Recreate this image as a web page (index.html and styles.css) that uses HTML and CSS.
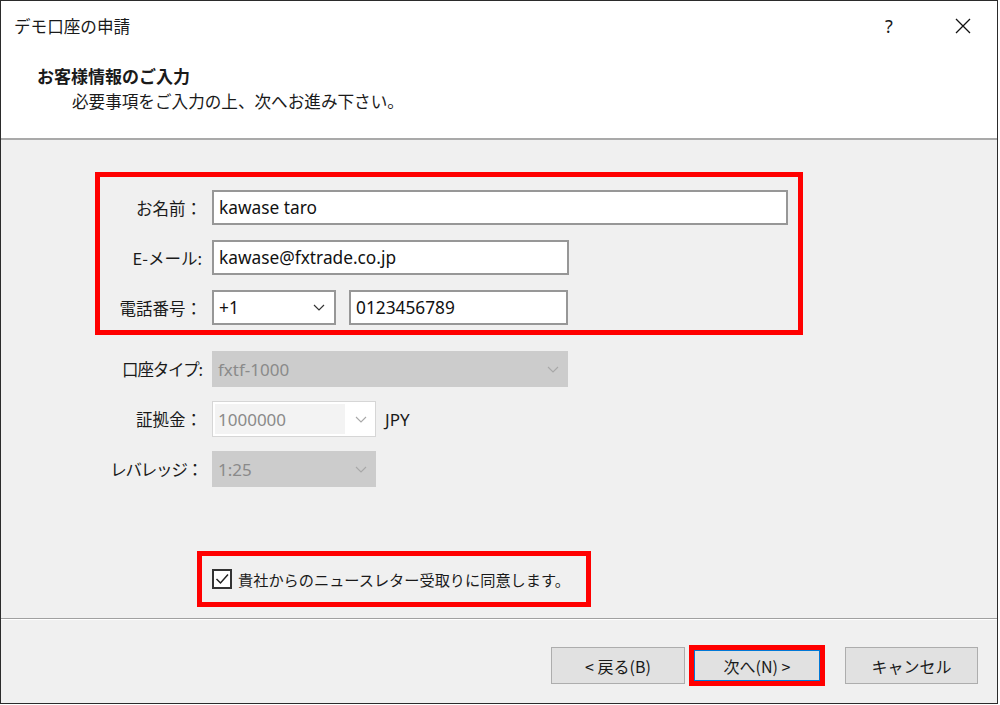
FILE: index.html
```html
<!DOCTYPE html>
<html lang="ja">
<head>
<meta charset="utf-8">
<title>デモ口座の申請</title>
<link rel="stylesheet" href="styles.css">
</head>
<body>
<div class="window">
  <header class="header">
    <div class="titlebar">
      <span class="title">デモ口座の申請</span>
      <span class="help">?</span>
      <span class="close">
        <svg width="16" height="16" viewBox="0 0 16 16"><path d="M1 1 L15 15 M15 1 L1 15" stroke="#111" stroke-width="1.3" fill="none"/></svg>
      </span>
    </div>
    <div class="heading">
      <div class="h-main">お客様情報のご入力</div>
      <div class="h-sub">必要事項をご入力の上、次へお進み下さい。</div>
    </div>
  </header>

  <main class="body">
    <div class="highlight top-box">
      <div class="grid">
        <div class="label">お名前：</div>
        <div class="row"><div class="input name">kawase taro</div></div>

        <div class="label">E-メール:</div>
        <div class="row"><div class="input email">kawase@fxtrade.co.jp</div></div>

        <div class="label">電話番号：</div>
        <div class="row">
          <div class="input combo phone-code">
            <span>+1</span>
            <svg class="chev" width="12" height="7" viewBox="0 0 12 7"><path d="M1 1 L6 6 L11 1" fill="none" stroke="#333" stroke-width="1.2"/></svg>
          </div>
          <div class="input phone">0123456789</div>
        </div>
      </div>
    </div>

    <div class="grid dis-grid">
      <div class="label kana">口座タイプ:</div>
      <div class="row">
        <div class="combo disabled acct">
          <span>fxtf-1000</span>
          <svg class="chev" width="12" height="7" viewBox="0 0 12 7"><path d="M1 1 L6 6 L11 1" fill="none" stroke="#a8a8a8" stroke-width="1.1"/></svg>
        </div>
      </div>

      <div class="label">証拠金：</div>
      <div class="row">
        <div class="combo editable margin">
          <span class="edit-area">1000000</span>
          <svg class="chev" width="12" height="7" viewBox="0 0 12 7"><path d="M1 1 L6 6 L11 1" fill="none" stroke="#a8a8a8" stroke-width="1.1"/></svg>
        </div>
        <span class="unit">JPY</span>
      </div>

      <div class="label kana">レバレッジ：</div>
      <div class="row">
        <div class="combo disabled lev">
          <span>1:25</span>
          <svg class="chev" width="12" height="7" viewBox="0 0 12 7"><path d="M1 1 L6 6 L11 1" fill="none" stroke="#a8a8a8" stroke-width="1.1"/></svg>
        </div>
      </div>
    </div>

    <div class="highlight check-box">
      <span class="checkbox">
        <svg width="16" height="16" viewBox="0 0 16 16"><path d="M2.5 8 L6.5 12 L14 3.5" fill="none" stroke="#222" stroke-width="1.5"/></svg>
      </span>
      <span class="check-text">貴社からのニュースレター受取りに同意します。</span>
    </div>
  </main>

  <footer class="footer">
    <button class="btn back">&lt; 戻る(B)</button>
    <div class="highlight next-box">
      <button class="btn next">次へ(N) &gt;</button>
    </div>
    <button class="btn cancel">キャンセル</button>
  </footer>
</div>
</body>
</html>
```

FILE: styles.css
```css
* { box-sizing: border-box; }

html, body {
  margin: 0;
  padding: 0;
  background: #ffffff;
}

body {
  font-family: "Noto Sans CJK JP", "Noto Sans", sans-serif;
  font-size: 16px;
  color: #1a1a1a;
}

.window {
  width: 998px;
  height: 704px;
  border: 1px solid #2b2b2b;
  background: #f0f0f0;
  display: flex;
  flex-direction: column;
}

/* ---------- header ---------- */
.header {
  height: 139px;
  background: #ffffff;
  border-bottom: 2px solid #a9a9a9;
  flex: none;
}

.titlebar {
  height: 49px;
  display: flex;
  align-items: center;
  padding-left: 13px;
}

.title {
  font-size: 16.6px;
  flex: 1;
}

.help {
  font-family: "Noto Sans", sans-serif;
  font-size: 18px;
  width: 16px;
  text-align: center;
  margin-right: 58px;
}

.close {
  display: flex;
  margin-right: 26px;
}

.heading {
  padding-top: 13px;
}

.h-main {
  font-weight: bold;
  font-size: 17px;
  line-height: 25px;
  padding-left: 36px;
}

.h-sub {
  font-size: 16.6px;
  line-height: 26px;
  padding-left: 71px;
}

/* ---------- body ---------- */
.body {
  flex: 1;
  display: flex;
  flex-direction: column;
  align-items: flex-start;
}

.highlight {
  border: 5px solid #ff0000;
}

.top-box {
  margin-top: 32px;
  margin-left: 94px;
  width: 708px;
  padding: 13px 0 5px 0;
}

.grid {
  display: grid;
  grid-template-columns: 104px auto;
  column-gap: 8px;
  row-gap: 15px;
  align-items: center;
}

.label {
  text-align: right;
  font-size: 16.5px;
  color: #1a1a1a;
  white-space: nowrap;
  padding-right: 2px;
}

.label.kana {
  letter-spacing: -1.2px;
}

.row {
  display: flex;
  align-items: center;
}

.input {
  height: 35px;
  background: #ffffff;
  border: 2px solid #979797;
  font-family: "Noto Sans", "Noto Sans CJK JP", sans-serif;
  font-size: 17.3px;
  padding-left: 5px;
  display: flex;
  align-items: center;
  color: #111;
}

.name { width: 576px; }
.email { width: 357px; }
.phone-code {
  width: 124px;
  justify-content: space-between;
  padding-right: 9px;
}
.phone {
  width: 219px;
  margin-left: 13px;
}

.combo {
  display: flex;
  align-items: center;
  justify-content: space-between;
}

.dis-grid {
  margin-top: 16px;
  margin-left: 0;
  padding-left: 99px;
  row-gap: 14px;
}

.combo.disabled {
  height: 36px;
  background: #cccccc;
  border: 1px solid #cccccc;
  color: #8a8a8a;
  font-family: "Noto Sans", "Noto Sans CJK JP", sans-serif;
  font-size: 17px;
  padding: 0 8px 0 5px;
}

.acct { width: 356px; }
.lev { width: 164px; }

.combo.editable {
  height: 36px;
  width: 164px;
  background: #ffffff;
  border: 1px solid #d6d6d6;
  padding: 2px 8px 2px 2px;
  font-family: "Noto Sans", "Noto Sans CJK JP", sans-serif;
  font-size: 17px;
  color: #8a8a8a;
}

.edit-area {
  background: #f3f3f3;
  height: 100%;
  width: 130px;
  display: flex;
  align-items: center;
  padding-left: 3px;
}

.unit {
  margin-left: 9px;
  font-family: "Noto Sans", sans-serif;
  font-size: 17px;
  color: #1a1a1a;
}

.check-box {
  margin-top: 64px;
  margin-left: 196px;
  width: 394px;
  height: 56px;
  display: flex;
  align-items: center;
  padding-left: 10px;
}

.checkbox {
  width: 20px;
  height: 20px;
  border: 2px solid #333333;
  background: #ffffff;
  display: flex;
  align-items: center;
  justify-content: center;
}

.check-text {
  margin-left: 6px;
  font-size: 15.2px;
}

/* ---------- footer ---------- */
.footer {
  height: 85px;
  flex: none;
  border-top: 1px solid #a0a0a0;
  box-shadow: inset 0 1px 0 #ffffff;
  display: flex;
  align-items: center;
  justify-content: flex-end;
  padding: 9px 19px 0 0;
}

.btn {
  height: 37px;
  background: #e1e1e1;
  border: 1px solid #adadad;
  font-family: "Noto Sans CJK JP", "Noto Sans", sans-serif;
  font-size: 16px;
  color: #1a1a1a;
  padding: 0;
}

.back { width: 134px; }

.next-box {
  margin-left: 4px;
  margin-right: 20px;
  display: flex;
}

.next {
  width: 126px;
  height: 31px;
  border: 1px solid #0078d7;
}

.cancel { width: 133px; }
```
